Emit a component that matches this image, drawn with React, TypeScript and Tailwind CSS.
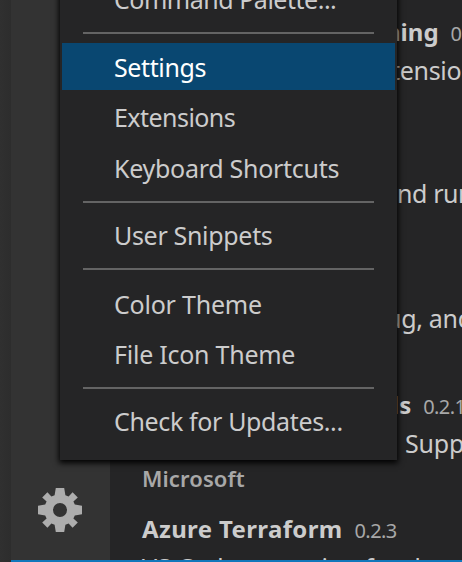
import type { ReactNode } from "react";

function MenuItem({ children, className = "" }: { children: ReactNode; className?: string }) {
  return (
    <div className={`h-[47px] shrink-0 pl-[52px] text-[25px] leading-[49px] whitespace-nowrap ${className}`}>
      {children}
    </div>
  );
}

function Separator({ className = "" }: { className?: string }) {
  return <div className={`mr-[21px] ml-[21px] h-[2px] shrink-0 bg-[#646464] ${className}`} />;
}

function Menu() {
  return (
    <div className="absolute -top-[25px] left-[60px] flex h-[485px] w-[337px] flex-col border-x-2 border-[#252526] bg-[#252526] text-[#cccccc] shadow-[0_2px_6px_1px_#000000]">
      <MenuItem className="tracking-[-0.48px]">Command Palette...</MenuItem>
      <Separator className="mt-[10px]" />
      <MenuItem className="mt-[9px] bg-[#094771] tracking-[-0.38px] text-white">Settings</MenuItem>
      <MenuItem className="mt-[3px] tracking-[-0.55px]">Extensions</MenuItem>
      <MenuItem className="mt-[4px] tracking-[-0.28px]">Keyboard Shortcuts</MenuItem>
      <Separator className="mt-[10px]" />
      <MenuItem className="mt-[8px] tracking-[-0.32px]">User Snippets</MenuItem>
      <Separator className="mt-[10px]" />
      <MenuItem className="mt-[10px] tracking-[-0.22px]">Color Theme</MenuItem>
      <MenuItem className="mt-[3px] tracking-[-0.25px]">File Icon Theme</MenuItem>
      <Separator className="mt-[10px]" />
      <MenuItem className="mt-[8px] tracking-[-0.36px]">Check for Updates...</MenuItem>
    </div>
  );
}

function Gear() {
  return (
    <svg className="mr-[2px] h-[44px] w-[44px]" viewBox="-22 -22 44 44" fill="#adadad">
      <path
        fillRule="evenodd"
        d="M-4.2-22H4.2L5.4-14.8 8.6-13.4 12.6-17.8 17.8-12.6 13.4-8.6 14.8-5.4 22-4.2V4.2L14.8 5.4 13.4 8.6 17.8 12.6 12.6 17.8 8.6 13.4 5.4 14.8 4.2 22H-4.2L-5.4 14.8-8.6 13.4-12.6 17.8-17.8 12.6-13.4 8.6-14.8 5.4-22 4.2V-4.2L-14.8-5.4-13.4-8.6-17.8-12.6-12.6-17.8-8.6-13.4-5.4-14.8ZM0-7A7 7 0 1 0 0 7A7 7 0 1 0 0-7Z"
      />
    </svg>
  );
}

export default function App() {
  return (
    <div className="relative flex h-[562px] w-[462px] overflow-hidden bg-[#252526] font-['Noto_Sans',sans-serif] text-[#cccccc]">
      <div className="w-[11px] shrink-0 bg-linear-to-r from-[#303030] to-[#2d2d2d]" />
      <div className="flex min-w-0 flex-1 flex-col">
        <div className="flex h-[560px] shrink-0 overflow-hidden">
          <div className="flex w-[99px] shrink-0 flex-col items-center justify-end bg-[#333333] pb-[28px]">
            <Gear />
          </div>
          <div className="flex min-w-0 flex-1 flex-col pt-[14px] whitespace-nowrap">
            <div className="h-[125px] shrink-0 text-[25px] leading-[36px]">
              <div className="flex items-baseline gap-[12px] pl-[275px]">
                <b className="text-[24px]">ning</b>
                <span className="text-[20px] tracking-[-0.6px] text-[#a8a8a8]">0.1.0</span>
              </div>
              <div className="pl-[281px] tracking-[-0.3px]">tensions</div>
            </div>
            <div className="h-[125px] shrink-0 pt-[36px] pl-[287px] text-[25px] leading-[36px] tracking-[-0.4px]">nd run</div>
            <div className="h-[123px] shrink-0 pt-[36px] pl-[276px] text-[25px] leading-[36px] tracking-[-0.3px]">ug, and</div>
            <div className="h-[124px] shrink-0 text-[25px] leading-[36px]">
              <div className="flex items-baseline gap-[12px] pl-[282px]">
                <b className="text-[24px]">ls</b>
                <span className="text-[20px] tracking-[-0.6px] text-[#a8a8a8]">0.2.1</span>
              </div>
              <div className="pl-[295px] tracking-[-0.2px]">Support</div>
              <div className="-mt-px pl-[32px] text-[22px] font-semibold tracking-[0.1px] text-[#a8a8a8]">Microsoft</div>
            </div>
            <div className="pl-[32px] text-[25px] leading-[36px]">
              <div className="flex items-baseline gap-[12px]">
                <b className="text-[24px] tracking-[0.36px]">Azure Terraform</b>
                <span className="text-[20px] tracking-[-0.6px] text-[#a8a8a8]">0.2.3</span>
              </div>
              <div>VS Code extension for developing</div>
            </div>
          </div>
        </div>
        <div className="h-[2px] bg-[#1177bb]" />
      </div>
      <Menu />
    </div>
  );
}
